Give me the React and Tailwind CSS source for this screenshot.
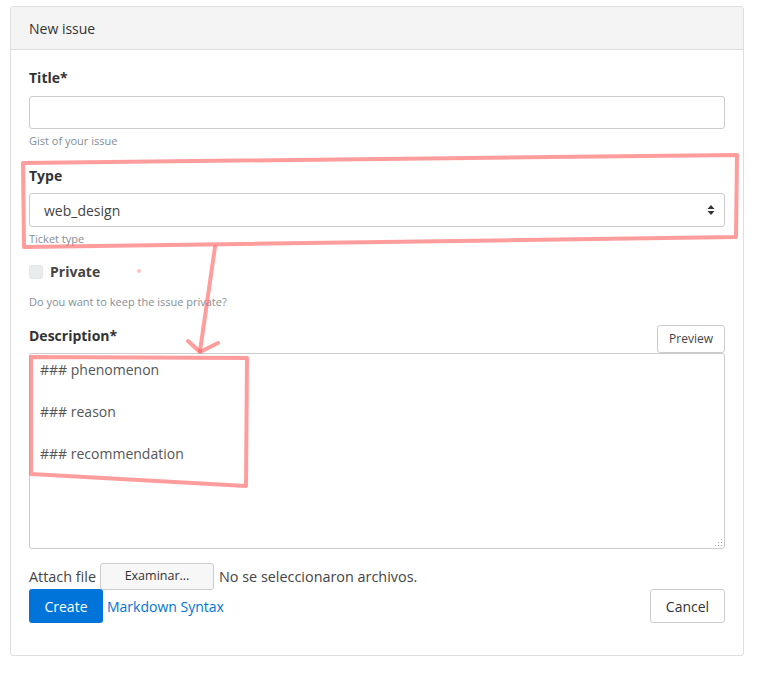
import React from "react";

const font = { fontFamily: '"Open Sans", "Noto Sans", sans-serif' };

// marcas rojas dibujadas encima del formulario
const Annotations = () => (
    <svg className="absolute left-0 top-0 pointer-events-none" width="759" height="674" viewBox="0 0 759 674">
        <defs>
            <filter id="soft" x="-5%" y="-5%" width="110%" height="110%">
                <feGaussianBlur stdDeviation="0.7" />
            </filter>
        </defs>
        <g fill="none" stroke="#ff5c5c" strokeOpacity="0.6" strokeWidth="4" strokeLinejoin="round" strokeLinecap="round" filter="url(#soft)">
            <polygon points="23,163 737,155 736,237 24,247" />
            <polyline points="215,247 200,351" />
            <polyline points="188,341 200,352 218,343" />
            <polygon points="31,357 247,358 246,486 31,474" />
        </g>
        <circle cx="139" cy="271" r="2" fill="#ff9a9a" fillOpacity="0.6" />
    </svg>
);

const Label = ({ children, className = "" }) => (
    <div className={`text-[14px] leading-[21px] font-bold text-[#333] ${className}`}>{children}</div>
);

const Help = ({ children, className = "" }) => (
    <div className={`text-[11px] leading-[16px] text-[#868e96] ${className}`}>{children}</div>
);

export default function App() {
    return (
        <div className="relative w-[759px] h-[674px] bg-white pt-[6px]" style={font}>
            <div className="ml-[10px] w-[734px] border border-[#dedede] rounded-[3px] bg-white">
                {/* cabecera */}
                <div className="h-[43px] flex items-center px-[18px] bg-[#f4f4f4] border-b border-[#dcdcdc] text-[14px] text-[#333]">
                    New issue
                </div>

                <div className="px-[18px] pt-[17px] pb-[32px]">
                    <Label>Title*</Label>
                    <div className="mt-[8px] h-[33px] border border-[#ccc] rounded-[3px]"></div>
                    <Help className="mt-[4px]">Gist of your issue</Help>

                    <Label className="mt-[16px]">Type</Label>
                    <div className="mt-[7px] h-[34px] border border-[#ccc] rounded-[3px] flex items-center justify-between pl-[14px] pr-[9px] text-[14px] text-[#444]">
                        <span>web_design</span>
                        <svg width="8" height="12" viewBox="0 0 8 12">
                            <path d="M4 1 L7.5 5 H0.5 Z" fill="#333" />
                            <path d="M4 11 L7.5 7 H0.5 Z" fill="#333" />
                        </svg>
                    </div>
                    <Help className="mt-[4px]">Ticket type</Help>

                    <div className="mt-[14px] flex items-center">
                        <div className="w-[14px] h-[14px] rounded-[3px] bg-[#e9ecef] border border-[#e3e6e9]"></div>
                        <span className="ml-[7px] text-[14px] font-bold text-[#444] leading-[21px]">Private</span>
                    </div>
                    <Help className="mt-[12px]">Do you want to keep the issue private?</Help>

                    <div className="mt-[15px] flex items-end justify-between">
                        <Label className="mb-[7px]">Description*</Label>
                        <div className="h-[28px] w-[68px] border border-[#ccc] rounded-[3px] flex items-center justify-center text-[12px] text-[#444]">
                            Preview
                        </div>
                    </div>
                    <div className="relative h-[196px] border border-[#ccc] rounded-[3px] pl-[10px] pt-[5px] text-[14px] leading-[21px] text-[#555]">
                        <div>### phenomenon</div>
                        <div className="h-[21px]"></div>
                        <div>### reason</div>
                        <div className="h-[21px]"></div>
                        <div>### recommendation</div>
                        <svg className="absolute right-[1px] bottom-[1px]" width="10" height="10" viewBox="0 0 10 10">
                            <g fill="#aaa">
                                <rect x="8" y="2" width="1" height="1" />
                                <rect x="8" y="5" width="1" height="1" />
                                <rect x="8" y="8" width="1" height="1" />
                                <rect x="5" y="5" width="1" height="1" />
                                <rect x="5" y="8" width="1" height="1" />
                                <rect x="2" y="8" width="1" height="1" />
                            </g>
                        </svg>
                    </div>

                    <div className="mt-[14px] flex items-center text-[14.4px] text-[#444]">
                        <span>Attach file</span>
                        <div className="ml-[4px] h-[27px] w-[114px] border border-[#ccc] rounded-[3px] bg-[#f7f7f7] flex items-center justify-center text-[12.5px] text-[#333]">
                            Examinar...
                        </div>
                        <span className="ml-[5px]">No se seleccionaron archivos.</span>
                    </div>

                    <div className="-mt-[1px] flex items-center justify-between">
                        <div className="flex items-center">
                            <div className="h-[34px] w-[74px] rounded-[3px] bg-[#0074d9] text-white text-[14px] flex items-center justify-center">
                                Create
                            </div>
                            <span className="ml-[4px] text-[14px] text-[#0074d9]">Markdown Syntax</span>
                        </div>
                        <div className="h-[34px] w-[75px] rounded-[3px] border border-[#ccc] text-[14px] text-[#333] flex items-center justify-center">
                            Cancel
                        </div>
                    </div>
                </div>
            </div>
            <Annotations />
        </div>
    );
}
